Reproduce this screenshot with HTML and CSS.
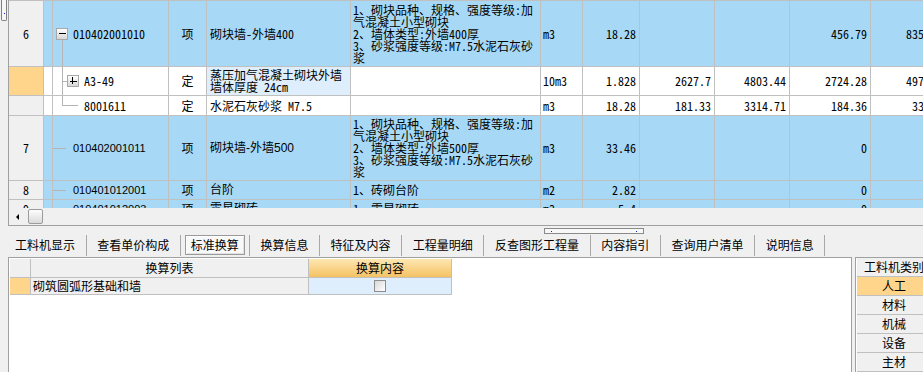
FILE: index.html
```html
<!DOCTYPE html>
<html lang="zh-CN">
<head>
    <meta charset="UTF-8">
    <title>标准换算</title>
    <link rel="stylesheet" href="styles.css">
</head>
<body>
    <div class="top">
        <div class="side-grip"><span class="side-grip-handle"><i class="dot"></i></span></div>
        <div class="grid-frame">
            <div class="grid-body">
                <div class="row h66 hl">
                    <div class="c hdr">6</div>
                    <div class="c"></div>
                    <div class="c code line-down"><span class="tree-box minus"></span>010402001010</div>
                    <div class="c center">项</div>
                    <div class="c name">砌块墙-外墙400</div>
                    <div class="c desc"><div>1、砌块品种、规格、强度等级:加<br>气混凝土小型砌块<br>2、墙体类型:外墙400厚<br>3、砂浆强度等级:M7.5水泥石灰砂<br>浆</div></div>
                    <div class="c">m3</div>
                    <div class="c num">18.28</div>
                    <div class="c num"></div>
                    <div class="c num"></div>
                    <div class="c num">456.79</div>
                    <div class="c num">8351.47</div>
                </div>
                <div class="row h29">
                    <div class="c hdr sel-hdr"></div>
                    <div class="c"></div>
                    <div class="c code line-through sub"><span class="branch short"></span><span class="tree-box plus"></span>A3-49</div>
                    <div class="c center">定</div>
                    <div class="c name sel-cell"><div class="two">蒸压加气混凝土砌块外墙<br>墙体厚度 24cm</div></div>
                    <div class="c desc"></div>
                    <div class="c">10m3</div>
                    <div class="c num">1.828</div>
                    <div class="c num">2627.7</div>
                    <div class="c num">4803.44</div>
                    <div class="c num">2724.28</div>
                    <div class="c num">4976.54</div>
                </div>
                <div class="row h20">
                    <div class="c hdr"></div>
                    <div class="c"></div>
                    <div class="c code line-end sub"><span class="branch long"></span>8001611</div>
                    <div class="c center">定</div>
                    <div class="c name">水泥石灰砂浆 M7.5</div>
                    <div class="c desc"></div>
                    <div class="c">m3</div>
                    <div class="c num">18.28</div>
                    <div class="c num">181.33</div>
                    <div class="c num">3314.71</div>
                    <div class="c num">184.36</div>
                    <div class="c num">3368.4</div>
                </div>
                <div class="row h65 hl">
                    <div class="c hdr">7</div>
                    <div class="c"></div>
                    <div class="c code alt leaf"><span class="branch top-level"></span>010402001011</div>
                    <div class="c center">项</div>
                    <div class="c name alt">砌块墙-外墙500</div>
                    <div class="c desc"><div>1、砌块品种、规格、强度等级:加<br>气混凝土小型砌块<br>2、墙体类型:外墙500厚<br>3、砂浆强度等级:M7.5水泥石灰砂<br>浆</div></div>
                    <div class="c">m3</div>
                    <div class="c num">33.46</div>
                    <div class="c num"></div>
                    <div class="c num"></div>
                    <div class="c num">0</div>
                    <div class="c num"></div>
                </div>
                <div class="row h19 hl">
                    <div class="c hdr">8</div>
                    <div class="c"></div>
                    <div class="c code alt leaf"><span class="branch top-level"></span>010401012001</div>
                    <div class="c center">项</div>
                    <div class="c name alt">台阶</div>
                    <div class="c desc">1、砖砌台阶</div>
                    <div class="c">m2</div>
                    <div class="c num">2.82</div>
                    <div class="c num"></div>
                    <div class="c num"></div>
                    <div class="c num">0</div>
                    <div class="c num"></div>
                </div>
                <div class="row h19 hl">
                    <div class="c hdr">9</div>
                    <div class="c"></div>
                    <div class="c code alt leaf"><span class="branch top-level"></span>010401012003</div>
                    <div class="c center">项</div>
                    <div class="c name alt">零星砌砖</div>
                    <div class="c desc">1、零星砌砖</div>
                    <div class="c">m3</div>
                    <div class="c num">5.4</div>
                    <div class="c num"></div>
                    <div class="c num"></div>
                    <div class="c num">0</div>
                    <div class="c num"></div>
                </div>
            </div>
            <div class="hscroll">
                <span class="arrow-left"></span>
                <span class="thumb"></span>
            </div>
        </div>
    </div>

    <div class="splitter"><span class="splitter-grip"><i class="dot"></i><i class="dot"></i></span></div>

    <div class="tabs">
        <span class="tab">工料机显示</span><span class="sep"></span>
        <span class="tab">查看单价构成</span><span class="sep"></span>
        <span class="tab active">标准换算</span><span class="sep"></span>
        <span class="tab">换算信息</span><span class="sep"></span>
        <span class="tab">特征及内容</span><span class="sep"></span>
        <span class="tab">工程量明细</span><span class="sep"></span>
        <span class="tab">反查图形工程量</span><span class="sep"></span>
        <span class="tab">内容指引</span><span class="sep"></span>
        <span class="tab">查询用户清单</span><span class="sep"></span>
        <span class="tab">说明信息</span><span class="sep"></span>
    </div>

    <div class="bottom">
        <div class="panel-main">
            <div class="sg-row sg-head">
                <div class="sg-c"></div>
                <div class="sg-c">换算列表</div>
                <div class="sg-c sg-orange">换算内容</div>
            </div>
            <div class="sg-row sg-data">
                <div class="sg-c sg-sel"></div>
                <div class="sg-c sg-name">砌筑圆弧形基础和墙</div>
                <div class="sg-c sg-check"><span class="checkbox"></span></div>
            </div>
        </div>
        <div class="panel-side">
            <div class="side-row">工料机类别</div>
            <div class="side-row active">人工</div>
            <div class="side-row">材料</div>
            <div class="side-row">机械</div>
            <div class="side-row">设备</div>
            <div class="side-row">主材</div>
        </div>
    </div>
</body>
</html>
```

FILE: styles.css
```css
* {
    box-sizing: border-box;
}
body {
    margin: 0;
    width: 923px;
    height: 372px;
    overflow: hidden;
    background: #f0f0f0;
    font-family: "Noto Sans Mono CJK SC", "Noto Sans CJK SC", monospace;
    font-size: 12px;
    line-height: 12px;
    color: #000;
}

/* top grid */
.top {
    display: flex;
    height: 226px;
}
.side-grip {
    width: 8px;
    flex: none;
}
.side-grip-handle {
    display: flex;
    justify-content: center;
    align-items: flex-end;
    width: 6px;
    height: 21px;
    margin-left: 1px;
    padding-bottom: 6px;
    border: 1px solid #808080;
    border-top: none;
    border-radius: 0 0 2px 2px;
    background: #f6f6f6;
}
.dot {
    display: block;
    width: 1px;
    height: 1px;
    background: #1020c0;
}
.grid-frame {
    flex: 1;
    min-width: 0;
    display: flex;
    flex-direction: column;
    border-left: 1px solid #a0a0a0;
    border-bottom: 1px solid #a0a0a0;
    overflow: hidden;
}
.grid-body {
    height: 208px;
    overflow: hidden;
    border-top: 1px solid #c0c0c0;
    background: #fff;
}
.row {
    display: grid;
    grid-template-columns: 35px 9px 116px 38px 144px 190px 42px 57px 75px 75px 81px 81px;
    width: 943px;
}
.h66 { height: 66px; }
.h65 { height: 65px; }
.h29 { height: 29px; }
.h20 { height: 20px; }
.h19 { height: 19px; }

.c {
    display: flex;
    align-items: center;
    min-width: 0;
    padding: 0 2px;
    overflow: hidden;
    white-space: nowrap;
    border-right: 1px solid #c0c0c0;
    border-bottom: 1px solid #c0c0c0;
}
.hl .c {
    background: #a7d9f7;
}
.row .hdr {
    justify-content: center;
    background: #f0f0f0;
}
.row .sel-hdr {
    background: #ffd58b;
}
.row .sel-cell {
    background: #deeefc;
}
.center {
    justify-content: center;
}
.num {
    justify-content: flex-end;
    padding-right: 3px;
}
.name {
    padding-left: 3px;
}
.desc div {
    line-height: 12px;
}
.two {
    line-height: 12px;
}
.alt {
    font-family: "Liberation Sans", "Noto Sans CJK SC", sans-serif;
}
.code.alt {
    font-size: 11px;
}

/* tree */
.code {
    position: relative;
    padding-left: 3px;
}
.code.sub {
    padding-left: 9px;
}
.code.leaf {
    padding-left: 0;
}
.line-down::before,
.line-through::before,
.line-end::before {
    content: "";
    position: absolute;
    left: 9px;
    border-left: 1px solid #b4b4b4;
}
.line-down::before {
    top: 50%;
    margin-top: 6px;
    bottom: 0;
}
.line-through::before {
    top: 0;
    bottom: 0;
}
.line-end::before {
    top: 0;
    height: 50%;
}
.branch {
    flex: none;
    height: 1px;
    background: #b4b4b4;
}
.branch.short {
    width: 5px;
}
.branch.long {
    width: 16px;
    margin-right: 6px;
}
.branch.top-level {
    width: 13px;
    margin-right: 7px;
}
.tree-box {
    flex: none;
    display: flex;
    align-items: center;
    justify-content: center;
    width: 12px;
    height: 12px;
    margin-right: 5px;
    border: 1px solid #a8a8a8;
    background: linear-gradient(#ffffff, #d6d6d6);
}
.tree-box::before {
    content: "";
    width: 7px;
    height: 1px;
    background: #000;
}
.tree-box.plus {
    position: relative;
}
.tree-box.plus::after {
    content: "";
    position: absolute;
    left: 4px;
    top: 1px;
    width: 1px;
    height: 7px;
    background: #000;
}

/* scrollbar */
.hscroll {
    height: 17px;
    display: flex;
    align-items: center;
    background: #f0f0f0;
}
.arrow-left {
    width: 0;
    height: 0;
    margin-left: 7px;
    border-right: 3px solid #000;
    border-top: 3px solid transparent;
    border-bottom: 3px solid transparent;
}
.thumb {
    width: 15px;
    height: 15px;
    margin-left: 9px;
    border: 1px solid #9c9c9c;
    border-radius: 2px;
    background: linear-gradient(#fdfdfd, #dadada);
}

/* splitter and tabs */
.splitter {
    height: 7px;
    padding: 2px 0 0 544px;
}
.splitter-grip {
    display: flex;
    align-items: center;
    justify-content: space-between;
    width: 100px;
    height: 6px;
    padding: 0 6px;
    border: 1px solid #8a8a8a;
    background: #f8f8f8;
}
.tabs {
    display: flex;
    align-items: center;
    height: 24px;
    padding-left: 4.4px;
}
.tab {
    padding: 0 10.6px;
    line-height: 14px;
}
.tab.active {
    display: flex;
    align-items: center;
    height: 20px;
    margin: 0 4px;
    padding: 0 5px;
    border: 1px solid #9a9a9a;
    background: #f8f8f8;
    box-shadow: inset 1px 1px 0 #fff, inset -1px -1px 0 #e2e2e2;
}
.sep {
    width: 1px;
    height: 21px;
    background: #a8a8a8;
}

/* bottom panels */
.bottom {
    display: flex;
    height: 115px;
}
.panel-main {
    width: 844px;
    margin-left: 8px;
    padding: 1px;
    border: 1px solid #a0a0a0;
    border-bottom: none;
    background: #fff;
}
.sg-row {
    display: grid;
    grid-template-columns: 21px 278px 143px;
}
.sg-head {
    height: 19px;
}
.sg-data {
    height: 17px;
}
.sg-c {
    display: flex;
    align-items: center;
    justify-content: center;
    border-right: 1px solid #c0c0c0;
    border-bottom: 1px solid #c0c0c0;
    background: #f0f0f0;
    white-space: nowrap;
}
.sg-orange {
    background: linear-gradient(#fde7b2, #f4c263);
}
.sg-sel {
    background: #ffd58b;
}
.sg-name {
    justify-content: flex-start;
    padding-left: 2px;
}
.sg-check {
    background: #deeefc;
}
.checkbox {
    width: 12px;
    height: 12px;
    border: 1px solid #8c8c8c;
    background: linear-gradient(135deg, #d8d8d8, #ffffff);
}
.panel-side {
    flex: 1;
    margin-left: 3px;
    overflow: hidden;
    border-left: 1px solid #a0a0a0;
    border-top: 1px solid #a0a0a0;
    background: #fff;
}
.side-row {
    display: flex;
    align-items: center;
    justify-content: center;
    width: 74px;
    height: 19px;
    margin-left: 1px;
    border-bottom: 1px solid #c0c0c0;
    background: #f0f0f0;
    white-space: nowrap;
}
.side-row.active {
    background: #ffd58b;
}
```
